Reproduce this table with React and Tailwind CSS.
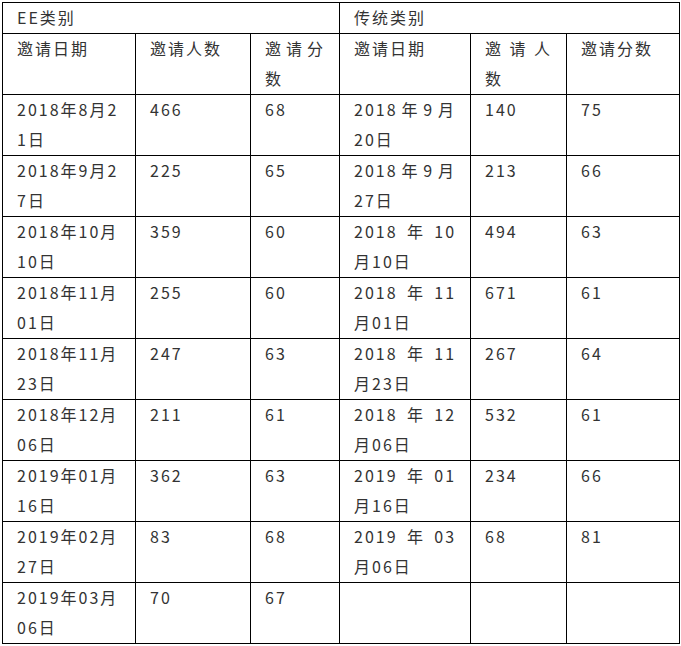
import React from "react";

const left = [
  ["2018年8月2", "1日", "466", "68"],
  ["2018年9月2", "7日", "225", "65"],
  ["2018年10月", "10日", "359", "60"],
  ["2018年11月", "01日", "255", "60"],
  ["2018年11月", "23日", "247", "63"],
  ["2018年12月", "06日", "211", "61"],
  ["2019年01月", "16日", "362", "63"],
  ["2019年02月", "27日", "83", "68"],
  ["2019年03月", "06日", "70", "67"],
];

const right = [
  ["2018年9月", "20日", "140", "75"],
  ["2018年9月", "27日", "213", "66"],
  ["2018年10", "月10日", "494", "63"],
  ["2018年11", "月01日", "671", "61"],
  ["2018年11", "月23日", "267", "64"],
  ["2018年12", "月06日", "532", "61"],
  ["2019年01", "月16日", "234", "66"],
  ["2019年03", "月06日", "68", "81"],
  null,
];

const td = "border border-black align-top px-[14px] py-0";

function Cell({ children, colSpan }) {
  return (
    <td colSpan={colSpan} className={td}>
      <div className="-mt-[1px] mb-[1px]">{children}</div>
    </td>
  );
}

function Two({ a, b, justify }) {
  return (
    <>
      <div className={justify ? "text-justify [text-align-last:justify]" : ""}>{a}</div>
      <div>{b}</div>
    </>
  );
}

export default function App() {
  return (
    <div
      className="pt-[2px] pl-[2px] bg-white min-h-[646px] text-[16px] leading-[30px] tracking-[2px] text-[#333]"
      style={{ fontFamily: '"Noto Sans CJK SC", "Noto Sans", sans-serif' }}
    >
      <table className="border-collapse table-fixed w-[677px]">
        <colgroup>
          <col className="w-[133px]" />
          <col className="w-[115px]" />
          <col className="w-[89px]" />
          <col className="w-[131px]" />
          <col className="w-[96px]" />
          <col className="w-[113px]" />
        </colgroup>
        <tbody>
          <tr className="h-[31px]">
            <Cell colSpan={3}>EE类别</Cell>
            <Cell colSpan={3}>传统类别</Cell>
          </tr>
          <tr className="h-[61px]">
            <Cell>邀请日期</Cell>
            <Cell>邀请人数</Cell>
            <Cell>
              <Two a="邀请分" b="数" justify />
            </Cell>
            <Cell>邀请日期</Cell>
            <Cell>
              <Two a="邀请人" b="数" justify />
            </Cell>
            <Cell>邀请分数</Cell>
          </tr>
          {left.map((l, i) => {
            const r = right[i];
            return (
              <tr key={i} className="h-[61px]">
                <Cell>
                  <Two a={l[0]} b={l[1]} />
                </Cell>
                <Cell>{l[2]}</Cell>
                <Cell>{l[3]}</Cell>
                <Cell>{r && <Two a={r[0]} b={r[1]} justify />}</Cell>
                <Cell>{r && r[2]}</Cell>
                <Cell>{r && r[3]}</Cell>
              </tr>
            );
          })}
        </tbody>
      </table>
    </div>
  );
}
